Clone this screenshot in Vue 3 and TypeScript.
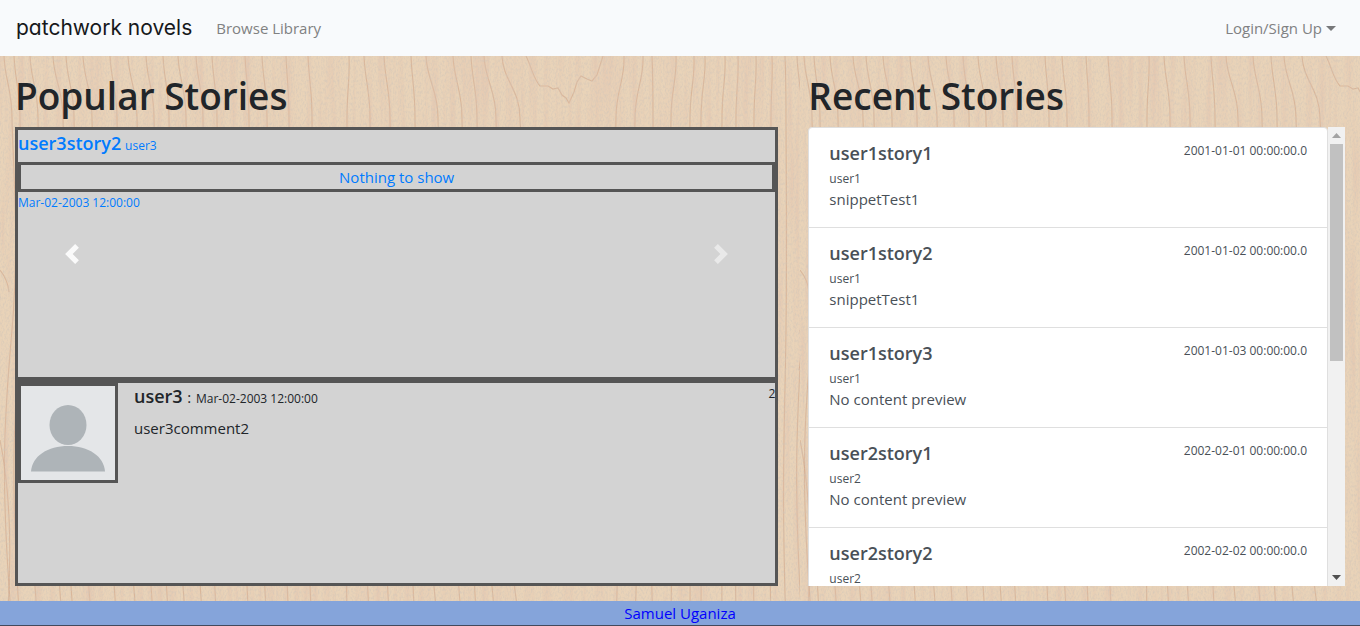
<script setup lang="ts">
import { computed, onBeforeUnmount, onMounted, ref } from 'vue'

interface Story {
  title: string
  author: string
  snippet: string
  date: string
}

const empty = 'No content preview'
const stories = ref<Story[]>([
  { title: 'user1story1', author: 'user1', snippet: 'snippetTest1', date: '2001-01-01 00:00:00.0' },
  { title: 'user1story2', author: 'user1', snippet: 'snippetTest1', date: '2001-01-02 00:00:00.0' },
  { title: 'user1story3', author: 'user1', snippet: empty, date: '2001-01-03 00:00:00.0' },
  { title: 'user2story1', author: 'user2', snippet: empty, date: '2002-02-01 00:00:00.0' },
  { title: 'user2story2', author: 'user2', snippet: empty, date: '2002-02-02 00:00:00.0' },
])

const totalRows = 9
const rowHeight = 100
const listHeight = computed(() => `${totalRows * rowHeight + 1}px`)

const scroller = ref<HTMLElement | null>(null)
const ratio = ref(1)
const offset = ref(0)
const measure = (): void => {
  const el = scroller.value
  if (!el) return
  ratio.value = el.clientHeight / el.scrollHeight
  offset.value = el.scrollTop / el.scrollHeight
}
const step = (by: number): void => scroller.value?.scrollBy({ top: by })
const thumb = computed(() => ({ height: `${ratio.value * 100}%`, top: `${offset.value * 100}%` }))

onMounted(() => {
  measure()
  window.addEventListener('resize', measure)
})
onBeforeUnmount(() => window.removeEventListener('resize', measure))

// Long, nearly vertical grain lines: x at the top and sideways drift.
const grain: [number, number][] = [
  [4, 8], [14, 6], [30, 8], [53, 10], [66, 8], [83, 9], [110, 7], [128, 9], [146, 8], [163, 6],
  [178, 8], [196, 7], [212, 5], [245, 4], [262, 5], [286, 3], [308, 4], [349, -2], [364, 6],
  [384, 6], [411, 4], [426, 12], [453, 9], [471, 6], [484, 12], [502, 18], [624, -8],
  [643, -8], [652, 1], [676, -5], [694, -4], [705, -4], [725, -3], [738, -2], [756, -2],
  [772, -1], [785, 1], [797, 5],
]
const grainPath = (x: number, d: number): string =>
  `M${x} 56 C${x + 1} 80 ${x + d} 90 ${x + d} 118 S${x + d * 2} 240 ${x + d} 330 S${x - 4} 480 ${x + d} 626`
</script>

<template>
  <div class="page">
    <svg class="wood" aria-hidden="true">
      <defs>
        <filter id="fibre" x="0" y="0" width="100%" height="100%">
          <feTurbulence type="fractalNoise" baseFrequency="0.16 0.008" numOctaves="3" seed="4" />
          <feColorMatrix values="0 0 0 0 0.76  0 0 0 0 0.54  0 0 0 0 0.42  1.3 0 0 0 -0.54" />
        </filter>
        <filter id="speckle" x="0" y="0" width="100%" height="100%">
          <feTurbulence type="fractalNoise" baseFrequency="0.6 0.35" numOctaves="2" seed="9" />
          <feColorMatrix values="0 0 0 0 0.64  0 0 0 0 0.56  0 0 0 0 0.48  1.4 0 0 0 -0.58" />
        </filter>
        <pattern id="planks" width="800" height="626" patternUnits="userSpaceOnUse">
          <rect width="800" height="626" fill="#e9d3b8" />
          <g fill="none" stroke="#c9997c" stroke-opacity="0.5" stroke-width="1.2">
            <path v-for="([x, d], i) in grain" :key="i" :d="grainPath(x, d)" />
            <path d="M526 56 C532 68 533 78 540 86 L548 86 553 89 558 88 562 95 566 98 569 103 574 92 577 82 581 76 587 79 592 81 597 75 603 56" />
            <path d="M0 270Q8 280 9 292M800 330Q803 350 799 370M0 440Q14 510 8 610" />
          </g>
        </pattern>
      </defs>
      <rect width="100%" height="100%" fill="url(#planks)" />
      <rect width="100%" height="100%" filter="url(#fibre)" />
      <rect width="100%" height="100%" filter="url(#speckle)" />
    </svg>

    <nav class="navbar">
      <a class="brand" href="#">patchwork novels</a>
      <a class="nav-link" href="#library">Browse Library</a>
      <button class="nav-link login" type="button">Login/Sign Up<span class="caret"></span></button>
    </nav>

    <main class="columns">
      <section class="column">
        <h1>Popular Stories</h1>
        <div class="popular">
          <div class="carousel">
            <a class="slide" href="#story">
              <span class="slide-head"><strong>user3story2</strong> <small>user3</small></span>
              <span class="slide-body">Nothing to show</span>
              <small class="slide-date">Mar-02-2003 12:00:00</small>
            </a>
            <button class="control prev" type="button" aria-label="Previous">
              <svg viewBox="0 0 8 8"><path d="M5.25 0l-4 4 4 4 1.5-1.5L4.25 4l2.5-2.5L5.25 0z" /></svg>
            </button>
            <button class="control next" type="button" aria-label="Next">
              <svg viewBox="0 0 8 8"><path d="M2.75 0l-1.5 1.5L3.75 4l-2.5 2.5L2.75 8l4-4-4-4z" /></svg>
            </button>
          </div>
          <article class="comment">
            <svg class="avatar" viewBox="0 0 94 94" role="img" aria-label="user3">
              <rect width="94" height="94" fill="#e4e6e8" />
              <ellipse cx="47" cy="39" rx="18.5" ry="20" fill="#aeb4b8" />
              <path d="M10 85.500C11 70 27 60 47 60S83 70 84 85.500Z" fill="#aeb4b8" />
            </svg>
            <div class="comment-text">
              <h2>user3 <span>:</span> <small>Mar-02-2003 12:00:00</small></h2>
              <p>user3comment2</p>
            </div>
            <small class="count">2</small>
          </article>
        </div>
      </section>

      <section class="column">
        <h1>Recent Stories</h1>
        <div class="recent">
          <div ref="scroller" class="scroller" tabindex="0" @scroll="measure">
            <div class="list" :style="{ minHeight: listHeight }">
              <a v-for="s in stories" :key="s.title" class="item" href="#story">
                <span class="item-head"><strong>{{ s.title }}</strong><small>{{ s.date }}</small></span>
                <small class="author">{{ s.author }}</small>
                <span class="snippet">{{ s.snippet }}</span>
              </a>
            </div>
          </div>
          <div class="scrollbar">
            <button class="arrow up" type="button" aria-label="Scroll up" @click="step(-40)">
              <svg viewBox="0 0 17 17"><path d="M4 11l4.500-5 4.500 5z" /></svg>
            </button>
            <div class="track"><div class="thumb" :style="thumb"></div></div>
            <button class="arrow down" type="button" aria-label="Scroll down" @click="step(40)">
              <svg viewBox="0 0 17 17"><path d="M4 6l4.500 5 4.500-5z" /></svg>
            </button>
          </div>
        </div>
      </section>
    </main>

    <footer class="footer"><a href="#author">Samuel Uganiza</a></footer>
  </div>
</template>

<style>
body {
  margin: 0;
}
</style>

<style scoped>
* {
  box-sizing: border-box;
}
.page {
  position: relative;
  display: flex;
  flex-direction: column;
  height: 100vh;
  font: 15px/24px "Open Sans", sans-serif;
  color: #212529;
}
a {
  text-decoration: none;
}
button {
  padding: 0;
  border: 0;
  background: none;
  font: inherit;
  cursor: pointer;
}
small {
  font-size: 12px;
}
.wood {
  position: absolute;
  inset: 0;
  z-index: -1;
  width: 100%;
  height: 100%;
}
.navbar {
  display: flex;
  align-items: center;
  gap: 24px;
  height: 56px;
  padding: 0 16px;
  background: #f8fafc;
}
.brand {
  color: #16181b;
  font: 400 21px/30px Inter, sans-serif;
  font-feature-settings: "cv11";
}
.nav-link {
  color: #808182;
}
.login {
  display: flex;
  align-items: center;
  gap: 4px;
  margin-left: auto;
  padding-right: 8px;
}
.caret {
  border: 5px solid transparent;
  border-top-color: #77787a;
  border-bottom: 0;
}
.columns {
  flex: 1;
  min-height: 0;
  display: grid;
  grid-template: minmax(0, 1fr) / 7fr 5fr;
}
.column {
  display: flex;
  flex-direction: column;
  gap: 8px;
  min-width: 0;
  padding: 15px;
}
h1 {
  margin: 0;
  font-size: 37px;
  line-height: 50px;
  height: 48px;
  font-weight: 600;
}
.popular {
  flex: 1;
  min-height: 0;
  display: grid;
  grid-template-rows: minmax(0, 16fr) minmax(0, 13fr);
}
.carousel {
  position: relative;
  display: flex;
}
.slide {
  flex: 1;
  display: flex;
  flex-direction: column;
  border: 3px solid #555;
  background: #d3d3d3;
  color: #007bff;
}
.slide-head {
  height: 32px;
  line-height: 26px;
}
strong,
h2 {
  font-size: 18px;
  font-weight: 600;
}
.slide-body {
  border: 3px solid #555;
  text-align: center;
}
.slide-date {
  line-height: 22px;
}
.control {
  position: absolute;
  top: 0;
  bottom: 0;
  width: 15%;
  display: flex;
  align-items: center;
  justify-content: center;
}
.control svg {
  width: 20px;
  height: 20px;
  fill: #fff;
}
.prev {
  left: 0;
  opacity: 0.9;
}
.next {
  right: 0;
  opacity: 0.5;
}
.comment {
  display: flex;
  align-items: flex-start;
  border: 3px solid #555;
  background: #d3d3d3;
}
.avatar {
  flex: none;
  width: 100px;
  height: 100px;
  margin-right: 16px;
  border: 3px solid #555;
}
.comment-text {
  flex: 1;
}
h2 {
  margin: 0 0 4px;
  line-height: 26px;
}
h2 span,
h2 small {
  font-weight: 400;
}
h2 span {
  font-size: 15px;
}
p {
  margin: 0;
}
.count {
  line-height: 22px;
}
.recent {
  flex: 1;
  min-height: 0;
  display: flex;
}
.scroller {
  flex: 1;
  overflow-y: auto;
  scrollbar-width: none;
}
.scrollbar {
  flex: none;
  width: 17px;
  display: flex;
  flex-direction: column;
  background: #f1f1f1;
}
.arrow {
  height: 17px;
}
.arrow svg {
  display: block;
  width: 17px;
  height: 17px;
}
.up {
  fill: #a3a3a3;
}
.down {
  fill: #505050;
}
.track {
  position: relative;
  flex: 1;
}
.thumb {
  position: absolute;
  left: 2px;
  right: 2px;
  background: #c1c1c1;
}
.list {
  border: 1px solid #dfdfdf;
  border-radius: 4px;
  background: #fff;
}
.item {
  display: flex;
  flex-direction: column;
  height: 100px;
  padding: 13px 20px;
  border-bottom: 1px solid #dfdfdf;
  color: #495057;
}
.item-head {
  display: flex;
  justify-content: space-between;
  margin-bottom: 4px;
}
.item-head strong {
  line-height: 24px;
}
.item-head small {
  line-height: 20px;
}
.author {
  line-height: 20px;
}
.snippet {
  line-height: 20px;
}
.footer {
  height: 25px;
  border-bottom: 1px solid #434a5c;
  background: #85a4da;
  text-align: center;
}
.footer a {
  color: #00f;
}
</style>
